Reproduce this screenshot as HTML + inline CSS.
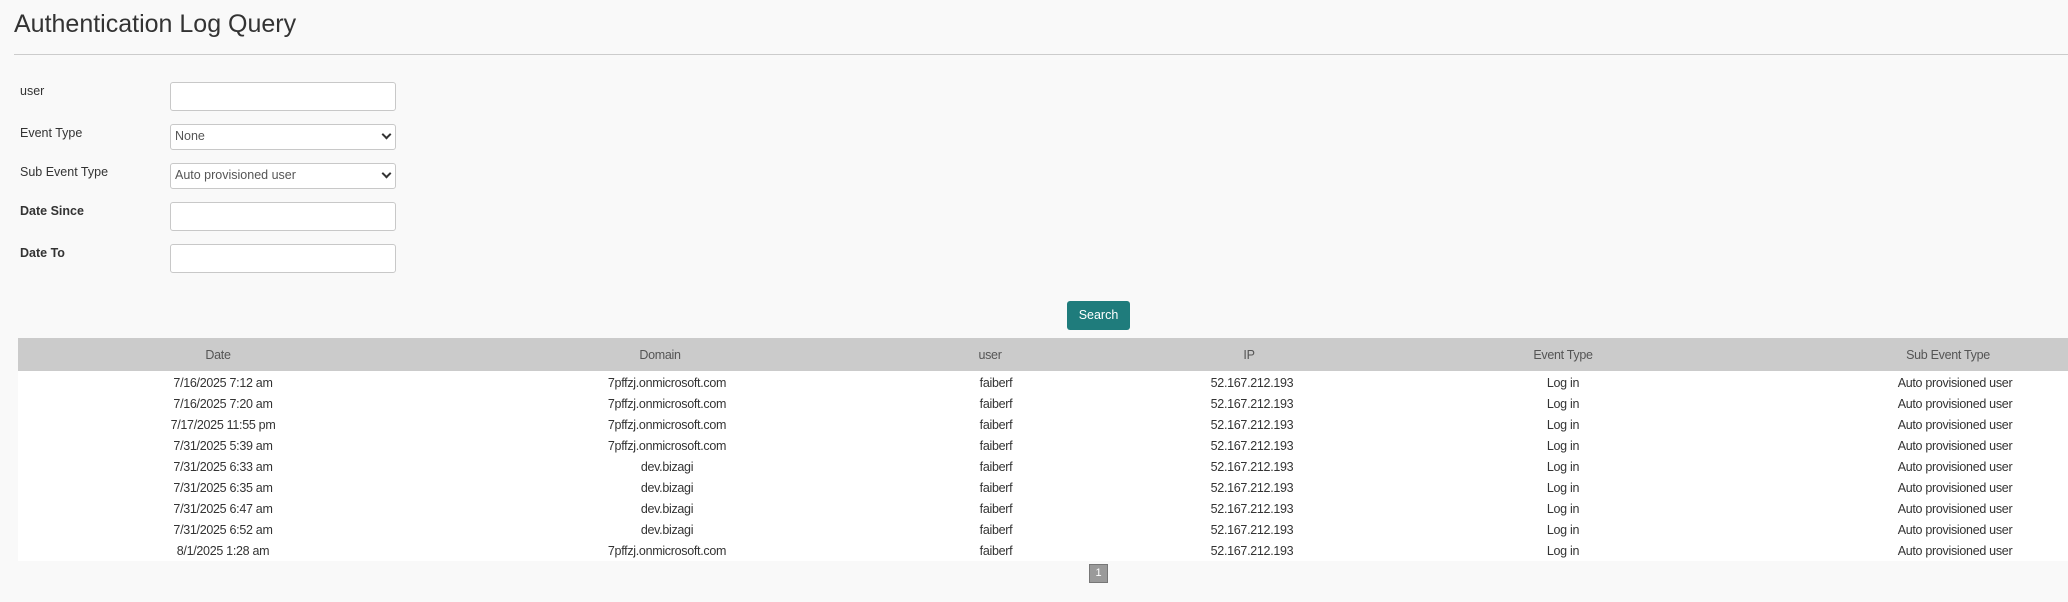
<!DOCTYPE html>
<html><head><meta charset="utf-8"><style>
*{margin:0;padding:0;box-sizing:border-box}
body{width:2068px;height:602px;background:#f9f9f9;font-family:"Liberation Sans",sans-serif;color:#333;position:relative;overflow:hidden}
.a{position:absolute}
h1{position:absolute;left:14px;top:10px;font-weight:normal;font-size:25px;color:#333}
.hr{left:14px;top:54px;right:0;height:1px;background:#ccc}
.lbl{left:20px;font-size:12.5px;color:#333}
.inp{left:170px;width:226px;background:#fff;border:1px solid #c8c8c8;border-radius:3px;font-size:12.5px;color:#555;padding-left:4px;line-height:23px}
.chev{position:absolute;right:5px;width:7px;height:7px;border-right:2px solid #333;border-bottom:2px solid #333;transform:rotate(45deg);top:6px}
.btn{left:1067px;top:301px;width:63px;height:29px;background:#1f7c7c;border-radius:3px;color:#fff;font-size:12.5px;text-align:center;line-height:29px}
.th{left:18px;right:0;top:338px;height:33px;background:#cbcbcb}
.tb{left:18px;right:0;top:371px;height:190px;background:#fff}
.c{position:absolute;transform:translateX(-50%);white-space:nowrap;font-size:12.5px;letter-spacing:-0.3px}
.h{color:#555;top:348px}
.pg{left:1089px;top:564px;width:19px;height:19px;background:#9a9a9a;border:1px solid #777;color:#fff;font-size:11px;text-align:center;line-height:17px}
</style></head><body>
<h1>Authentication Log Query</h1>
<div class="a hr"></div>
<div class="a lbl" style="top:84px">user</div>
<div class="a lbl" style="top:126px">Event Type</div>
<div class="a lbl" style="top:165px">Sub Event Type</div>
<div class="a lbl" style="top:204px;font-weight:bold">Date Since</div>
<div class="a lbl" style="top:246px;font-weight:bold">Date To</div>
<div class="a inp" style="top:82px;height:29px"></div>
<div class="a inp" style="top:124px;height:26px">None<span class="chev"></span></div>
<div class="a inp" style="top:163px;height:26px">Auto provisioned user<span class="chev"></span></div>
<div class="a inp" style="top:202px;height:29px"></div>
<div class="a inp" style="top:244px;height:29px"></div>
<div class="a btn">Search</div>
<div class="a th"></div>
<div class="a tb"></div>
<div class="c h" style="left:218px">Date</div>
<div class="c h" style="left:660px">Domain</div>
<div class="c h" style="left:990px">user</div>
<div class="c h" style="left:1249px">IP</div>
<div class="c h" style="left:1563px">Event Type</div>
<div class="c h" style="left:1948px">Sub Event Type</div>
<div id="rows"></div>
<script>
var d=[["7/16/2025 7:12 am","7pffzj.onmicrosoft.com"],["7/16/2025 7:20 am","7pffzj.onmicrosoft.com"],["7/17/2025 11:55 pm","7pffzj.onmicrosoft.com"],["7/31/2025 5:39 am","7pffzj.onmicrosoft.com"],["7/31/2025 6:33 am","dev.bizagi"],["7/31/2025 6:35 am","dev.bizagi"],["7/31/2025 6:47 am","dev.bizagi"],["7/31/2025 6:52 am","dev.bizagi"],["8/1/2025 1:28 am","7pffzj.onmicrosoft.com"]];
var h="";d.forEach(function(r,i){var t=376+i*21;var v=[r[0],r[1],"faiberf","52.167.212.193","Log in","Auto provisioned user"];var x=[223,667,996,1252,1563,1955];for(var j=0;j<6;j++)h+='<div class="c" style="top:'+t+'px;left:'+x[j]+'px">'+v[j]+'</div>';});
document.getElementById("rows").innerHTML=h;
</script>
<div class="a pg">1</div>
</body></html>
